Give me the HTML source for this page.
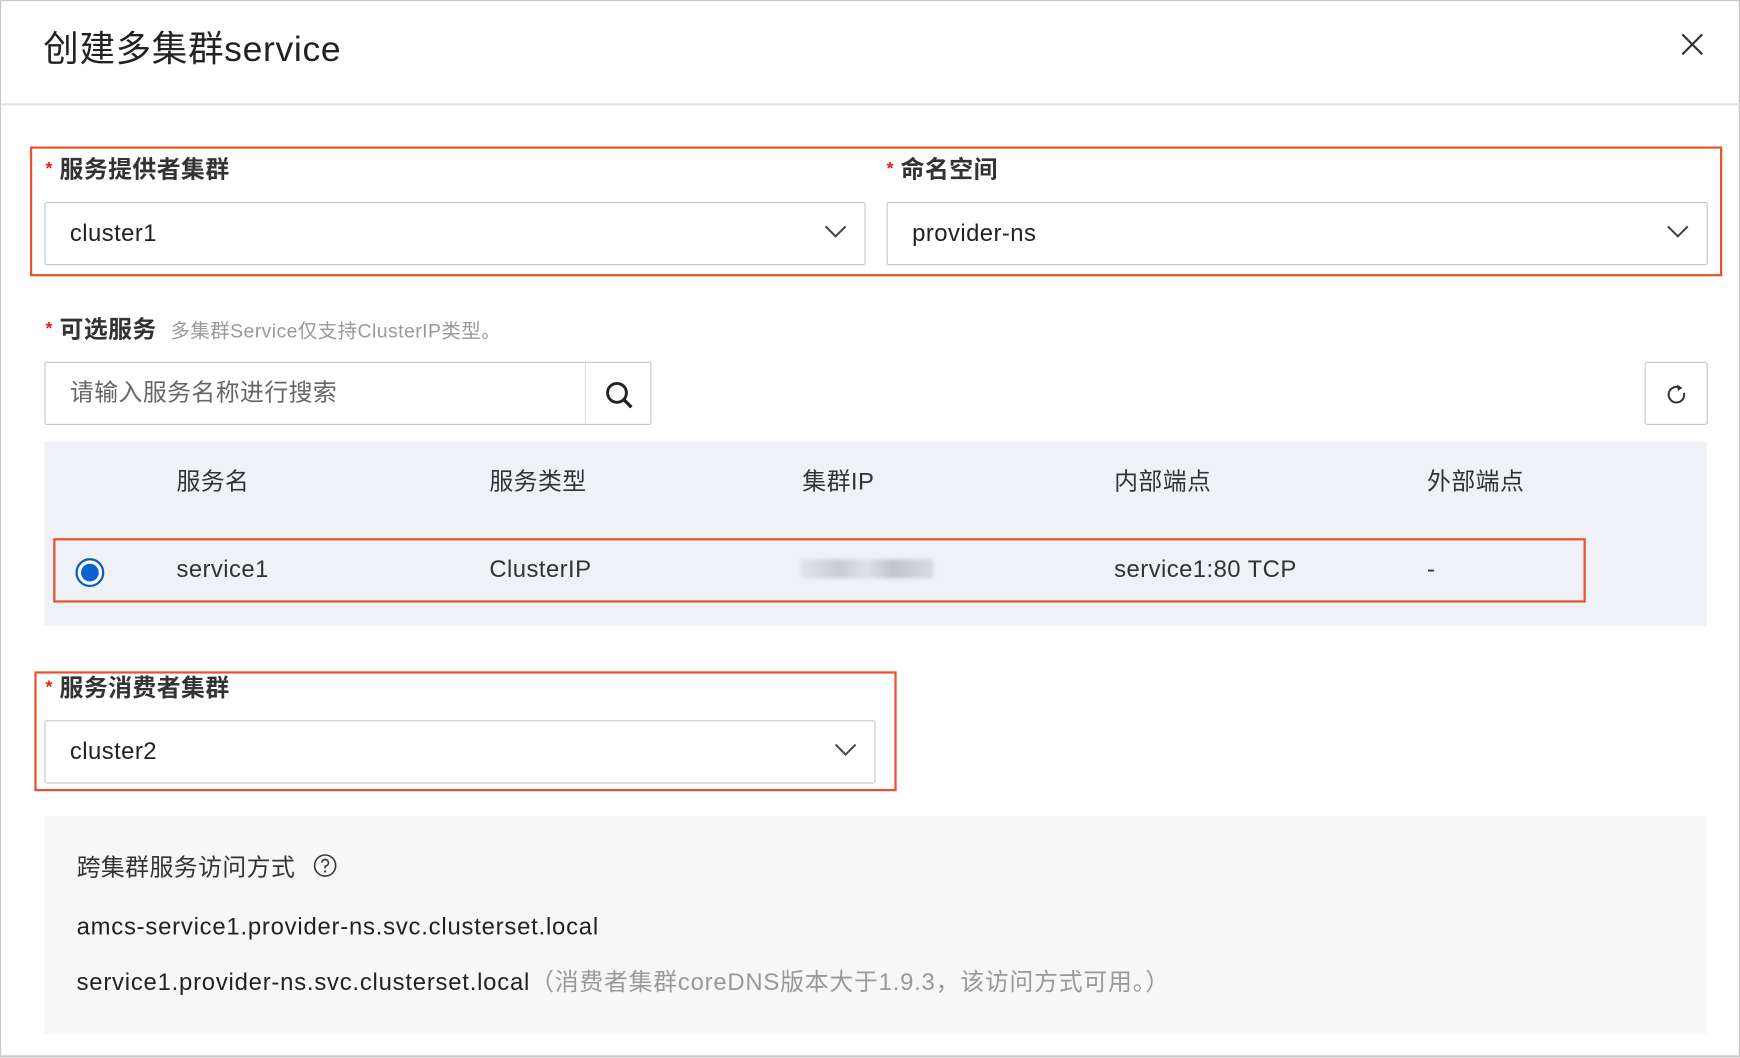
<!DOCTYPE html>
<html><head><meta charset="utf-8"><style>
*{box-sizing:border-box;margin:0;padding:0}
html,body{width:1740px;height:1058px;overflow:hidden;background:#fff}
#w{position:absolute;left:0;top:0;width:1568px;height:953px;transform:scale(1.10969);transform-origin:0 0;font-family:"Liberation Sans","Noto Sans CJK SC",sans-serif;color:#333;border:1px solid #c8c8c8;border-bottom:2px solid #c8c8c8;letter-spacing:0.4px}
.a{position:absolute}
.red{position:absolute;border:2px solid #e8512f}
.lbl{position:absolute;font-size:21.5px;font-weight:bold;color:#333;line-height:26px}
.lbl b{color:#e0201c;font-size:16px;margin-right:6px;vertical-align:top}
.sel{position:absolute;border:1px solid #c4c6cc;border-radius:2px;background:#fff;font-size:21.5px;line-height:55px;padding-left:22px;color:#222}
.chev{position:absolute;top:20px;width:20px;height:12px}
.th{position:absolute;top:416px;font-size:21.5px;color:#333}
.td{position:absolute;top:500px;font-size:21.5px;color:#333}
</style></head><body><div id="w">
<div class="a" style="left:38px;top:18px;font-size:32px;color:#222;letter-spacing:0.6px">创建多集群service</div>
<svg class="a" style="left:1513px;top:28px" width="22" height="22" viewBox="0 0 22 22"><path d="M2 2L20 20M20 2L2 20" stroke="#333" stroke-width="2"/></svg>
<div class="a" style="left:0;top:92px;width:1568px;height:2px;background:#e3e3e3"></div>

<div class="red" style="left:26px;top:131px;width:1525px;height:117px"></div>
<div class="lbl" style="left:40px;top:139px"><b>*</b>服务提供者集群</div>
<div class="lbl" style="left:798px;top:139px"><b>*</b>命名空间</div>
<div class="sel" style="left:39px;top:181px;width:740px;height:57px">cluster1<svg class="chev" style="left:702px" viewBox="0 0 20 12"><path d="M1 1L10 10L19 1" fill="none" stroke="#444" stroke-width="1.8"/></svg></div>
<div class="sel" style="left:798px;top:181px;width:740px;height:57px">provider-ns<svg class="chev" style="left:702px" viewBox="0 0 20 12"><path d="M1 1L10 10L19 1" fill="none" stroke="#444" stroke-width="1.8"/></svg></div>

<div class="lbl" style="left:40px;top:283px"><b>*</b>可选服务 <span style="font-weight:normal;font-size:17.5px;color:#999;margin-left:6px">多集群Service仅支持ClusterIP类型。</span></div>
<div class="sel" style="left:39px;top:325px;width:547px;height:57px;color:#666">请输入服务名称进行搜索</div>
<div class="a" style="left:526px;top:326px;width:1px;height:55px;background:#ddd"></div>
<svg class="a" style="left:543px;top:341px" width="28" height="28" viewBox="0 0 28 28"><circle cx="12" cy="12" r="8.5" fill="none" stroke="#222" stroke-width="2.6"/><path d="M18 18L25 25" stroke="#222" stroke-width="3"/></svg>
<div class="a" style="left:1481px;top:325px;width:57px;height:57px;border:1px solid #c4c6cc;border-radius:3px"></div>
<svg class="a" style="left:1499px;top:343px" width="22" height="22" viewBox="0 0 22 22"><path d="M14 5.5A7 7 0 1 0 17.5 10" fill="none" stroke="#333" stroke-width="1.8"/><path d="M11.5 2.5L16 5.5L12 8.5Z" fill="#333"/></svg>

<div class="a" style="left:39px;top:397px;width:1498px;height:166px;background:#eef1f6"></div>
<div class="th" style="left:158px">服务名</div>
<div class="th" style="left:440px">服务类型</div>
<div class="th" style="left:722px">集群IP</div>
<div class="th" style="left:1003px">内部端点</div>
<div class="th" style="left:1285px">外部端点</div>
<div class="red" style="left:47px;top:484px;width:1381px;height:58px"></div>
<div class="a" style="left:67px;top:502px;width:26px;height:26px;border-radius:50%;border:2px solid #0a5bc2;background:#fff"></div>
<div class="a" style="left:72px;top:507px;width:16px;height:16px;border-radius:50%;background:#0a62d0"></div>
<div class="td" style="left:158px">service1</div>
<div class="td" style="left:440px">ClusterIP</div>
<div class="a" style="left:720px;top:503px;width:120px;height:17px;background:linear-gradient(90deg,#e3e5ea,#c9ccd2 30%,#dfe1e6 50%,#c2c5cb 70%,#d8dadf);filter:blur(1.5px)"></div>
<div class="td" style="left:1003px">service1:80 TCP</div>
<div class="td" style="left:1285px">-</div>

<div class="red" style="left:30px;top:604px;width:777px;height:108px"></div>
<div class="lbl" style="left:40px;top:606px"><b>*</b>服务消费者集群</div>
<div class="sel" style="left:39px;top:648px;width:749px;height:57px">cluster2<svg class="chev" style="left:711px" viewBox="0 0 20 12"><path d="M1 1L10 10L19 1" fill="none" stroke="#444" stroke-width="1.8"/></svg></div>

<div class="a" style="left:39px;top:734px;width:1498px;height:197px;background:#f7f7f7"></div>
<div class="a" style="left:68px;top:764px;font-size:21.5px;color:#333">跨集群服务访问方式</div>
<svg class="a" style="left:281px;top:768px" width="22" height="22" viewBox="0 0 22 22"><circle cx="11" cy="11" r="9.5" fill="none" stroke="#333" stroke-width="1.4"/><path d="M8 8.5A3 3 0 1 1 11 11.5V13.5" fill="none" stroke="#333" stroke-width="1.4"/><circle cx="11" cy="16.3" r="1" fill="#333"/></svg>
<div class="a" style="left:68px;top:822px;font-size:21.5px;color:#222;letter-spacing:0.7px">amcs-service1.provider-ns.svc.clusterset.local</div>
<div class="a" style="left:68px;top:867px;font-size:21.5px;color:#222;letter-spacing:0.7px">service1.provider-ns.svc.clusterset.local<span style="color:#999">（消费者集群coreDNS版本大于1.9.3，该访问方式可用。）</span></div>
</div></body></html>
